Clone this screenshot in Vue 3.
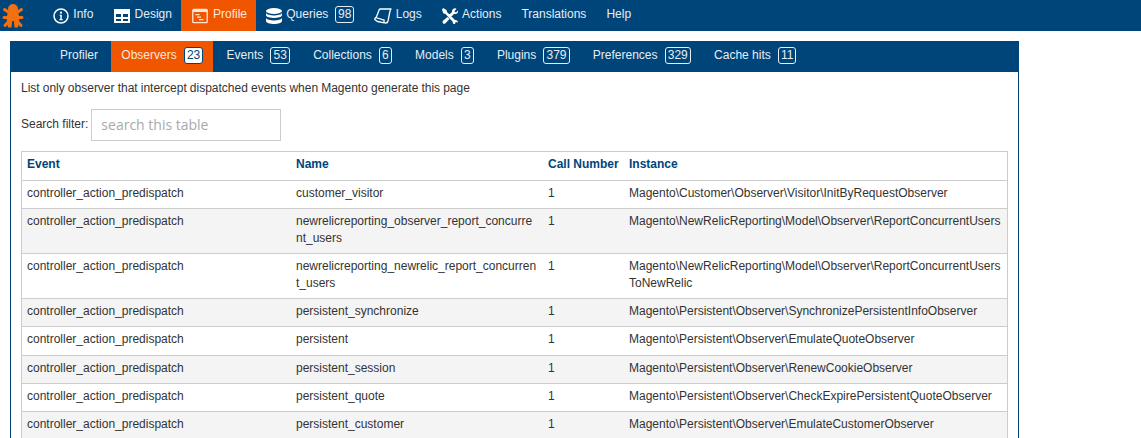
<script setup>
const mainNav = [
  { label: 'Info', icon: 'info' },
  { label: 'Design', icon: 'design' },
  { label: 'Profile', icon: 'profile', active: true },
  { label: 'Queries', icon: 'queries', badge: 98 },
  { label: 'Logs', icon: 'logs' },
  { label: 'Actions', icon: 'actions' },
  { label: 'Translations' },
  { label: 'Help' }
]

const subNav = [
  { label: 'Profiler' },
  { label: 'Observers', badge: 23, active: true },
  { label: 'Events', badge: 53 },
  { label: 'Collections', badge: 6 },
  { label: 'Models', badge: 3 },
  { label: 'Plugins', badge: 379 },
  { label: 'Preferences', badge: 329 },
  { label: 'Cache hits', badge: 11 }
]

const ev = 'controller_action_predispatch'
const rows = [
  [ev, 'customer_visitor', 1, 'Magento\\Customer\\Observer\\Visitor\\InitByRequestObserver'],
  [ev, 'newrelicreporting_observer_report_concurrent_users', 1, 'Magento\\NewRelicReporting\\Model\\Observer\\ReportConcurrentUsers'],
  [ev, 'newrelicreporting_newrelic_report_concurrent_users', 1, 'Magento\\NewRelicReporting\\Model\\Observer\\ReportConcurrentUsersToNewRelic'],
  [ev, 'persistent_synchronize', 1, 'Magento\\Persistent\\Observer\\SynchronizePersistentInfoObserver'],
  [ev, 'persistent', 1, 'Magento\\Persistent\\Observer\\EmulateQuoteObserver'],
  [ev, 'persistent_session', 1, 'Magento\\Persistent\\Observer\\RenewCookieObserver'],
  [ev, 'persistent_quote', 1, 'Magento\\Persistent\\Observer\\CheckExpirePersistentQuoteObserver'],
  [ev, 'persistent_customer', 1, 'Magento\\Persistent\\Observer\\EmulateCustomerObserver']
]
</script>

<template>
  <div class="page">
    <nav class="topbar">
      <svg class="logo" width="24" height="31" viewBox="0 0 24 31">
        <g fill="none" stroke="#f2700f" stroke-width="3" stroke-linecap="round">
          <path d="M3.500 9.500L8 12.500M20.500 9.500L16 12.500M3 17.500H8M21 17.500H16M4 25.500L8 21M20 25.500L16 21" />
        </g>
        <circle cx="12" cy="9" r="5" fill="#f2700f" />
        <path d="M7 12h10l1.500 6-1.500 9.500h-3.500L12.800 21h-1.600l-.7 6.500H7L5.500 18z" fill="#f2700f" />
      </svg>
      <a v-for="item in mainNav" :key="item.label" class="nav-item" :class="[item.icon, { active: item.active }]">
        <svg v-if="item.icon === 'info'" class="ico" viewBox="0 0 16 16" width="16" height="16">
          <circle cx="8" cy="8" r="7" fill="none" stroke="#fff" stroke-width="1.500" />
          <circle cx="8" cy="4.700" r="1.100" fill="#fff" />
          <path d="M6.600 6.800h2.200v4.500h1v1H6.300v-1h1v-3.500h-.7z" fill="#fff" />
        </svg>
        <svg v-else-if="item.icon === 'design'" class="ico" viewBox="0 0 16 14" width="16" height="14">
          <path fill-rule="evenodd" fill="#fff" d="M0 0h16v14H0zM2 5v3h5V5zM9 5v3h5V5zM2 10v2h5v-2zM9 10v2h5v-2z" />
        </svg>
        <svg v-else-if="item.icon === 'profile'" class="ico" viewBox="0 0 16 16" width="16" height="16">
          <rect x=".8" y="1.300" width="14.400" height="13.400" rx="1" fill="none" stroke="#fde8dc" stroke-width="1.300" />
          <path d="M1 2h14v2H1zM3.500 6h4v1.200h-4zM5 8.500h4v1.200H5zM7 11h4.500v1.200H7z" fill="#fde8dc" />
        </svg>
        <svg v-else-if="item.icon === 'queries'" class="ico" viewBox="0 0 16 16" width="16" height="16">
          <ellipse cx="8" cy="3" rx="8" ry="3" fill="#fff" />
          <path d="M0 5c1 1.800 4 2.400 8 2.400S15 6.800 16 5v2.500c-1 1.800-4 2.400-8 2.400S1 9.300 0 7.500zM0 10c1 1.800 4 2.400 8 2.400s7-.6 8-2.400v3c0 1.800-4 3-8 3s-8-1.200-8-3z" fill="#fff" />
        </svg>
        <svg v-else-if="item.icon === 'logs'" class="ico" viewBox="0 0 18 16" width="18" height="16">
          <path d="M5.500 1h11.500c-.6 1-1 2-1.300 3.500L14 13c-.3 1.300-1 2-2.300 2-1.200 0-1.900-.8-1.700-1.800l.2-1-8.700-2.700L.7 11.500 3.500 13.500l6.800 1.300M5.500 1L2.200 9.500" fill="none" stroke="#fff" stroke-width="1.300" stroke-linejoin="round" />
        </svg>
        <svg v-else-if="item.icon === 'actions'" class="ico" viewBox="0 0 16 16" width="16" height="16">
          <path fill="#fff" d="M1 0l3.500 2 .5 2 8 8c1.500-.3 3 1 3 2.500l-2-.5-1 1 .5 1.800c-1.500 0-3-1.300-2.800-3L3.500 6 1.500 5.500 0 2zM11 1c1.500-1 3-.8 3.500 0L12.500 3l.5 1 1 .5 2-2c.5 1.500-.2 3-2 3.500-1 .2-1.500 0-2 0L9 9 7 7l3-3c-.2-1 0-2 1-3zM5.500 9l2 2-4 4.200c-.8.800-1.800.8-2.500 0-.7-.7-.6-1.700 0-2.400z" />
        </svg>
        <span class="label">{{ item.label }}</span>
        <span v-if="item.badge" class="badge">{{ item.badge }}</span>
      </a>
    </nav>

    <main class="panel">
      <div class="tabs">
        <a v-for="tab in subNav" :key="tab.label" class="tab" :class="{ active: tab.active }">
          <span class="label">{{ tab.label }}</span>
          <span v-if="tab.badge" class="badge">{{ tab.badge }}</span>
        </a>
      </div>
      <div class="content">
        <p class="intro">List only observer that intercept dispatched events when Magento generate this page</p>
        <div class="filter">
          <label>Search filter:</label>
          <input type="text" placeholder="search this table" />
        </div>
        <table>
          <colgroup>
            <col class="c1" /><col class="c2" /><col class="c3" /><col />
          </colgroup>
          <thead>
            <tr><th>Event</th><th>Name</th><th>Call Number</th><th>Instance</th></tr>
          </thead>
          <tbody>
            <tr v-for="(r, i) in rows" :key="i">
              <td v-for="(c, j) in r" :key="j">{{ c }}</td>
            </tr>
          </tbody>
        </table>
      </div>
    </main>
  </div>
</template>

<style scoped>
.page {
  height: 438px;
  overflow: hidden;
  font-family: "Liberation Sans", Arial, sans-serif;
  font-size: 12px;
  line-height: 1.42857;
  color: #333;
  background: #fff;
}
.topbar {
  display: flex;
  height: 31px;
  background: #00457a;
  padding-left: 1px;
}
.logo { margin-right: 18px; }
.nav-item {
  display: flex;
  align-items: center;
  gap: 4.300px;
  padding: 0 10px;
  color: #e6edf3;
  white-space: nowrap;
}
.nav-item.active { background: #f05500; color: #fde8dc; }
.nav-item.info { padding-right: 11px; }
.nav-item.design { padding-right: 9px; }
.nav-item.profile { gap: 5px; padding: 0 9px 0 11px; }
.nav-item.logs { gap: 3.300px; }
.ico { flex: none; }
.label { margin-bottom: 2px; }
.badge {
  display: inline-block;
  margin-bottom: 2px;
  padding: 0 2px;
  text-align: center;
  border: 1px solid #e6edf3;
  border-radius: 3px;
  line-height: 15px;
  color: #e6edf3;
}
.nav-item .badge { margin-left: 2.500px; }
.panel {
  margin: 10px 122px 0 10px;
  border: 1px solid #00457a;
  border-top: 0;
}
.tabs {
  display: flex;
  gap: 3.330px;
  height: 31px;
  margin: 0 -1px;
  padding-left: 40px;
  background: #00457a;
}
.tab {
  display: flex;
  align-items: center;
  gap: 7.200px;
  padding: 0 10px;
  color: #e6edf3;
  white-space: nowrap;
}
.tab.active { background: #f05500; color: #fde8dc; }
.tab.active .badge { background: #fff; color: #00457a; border-color: #00457a; }
.content { padding: 8px 10px; }
.intro { margin: 0; line-height: 17px; word-spacing: -.25px; }
.filter {
  display: flex;
  align-items: center;
  gap: 3px;
  margin-top: 12px;
}
.filter input {
  width: 190px;
  height: 32px;
  box-sizing: border-box;
  padding: 0 9px 2px;
  border: 1px solid #ccc;
  font-family: "Open Sans", sans-serif;
  font-size: 14px;
  outline: none;
}
.filter input::placeholder { color: #aaa; opacity: 1; }
table {
  width: 987px;
  margin-top: 10.400px;
  border: 1px solid #ccc;
  border-spacing: 0;
  border-collapse: separate;
  table-layout: fixed;
}
.c1 { width: 269px; }
.c2 { width: 252px; }
.c3 { width: 81px; }
th, td {
  padding: 4px 5px 6px;
  text-align: left;
  vertical-align: top;
  overflow-wrap: anywhere;
}
tbody td { border-top: 1px solid #ccc; }
th { color: #00457a; font-weight: 700; white-space: nowrap; }
tbody tr:nth-child(even) { background: #f4f4f4; }
</style>
